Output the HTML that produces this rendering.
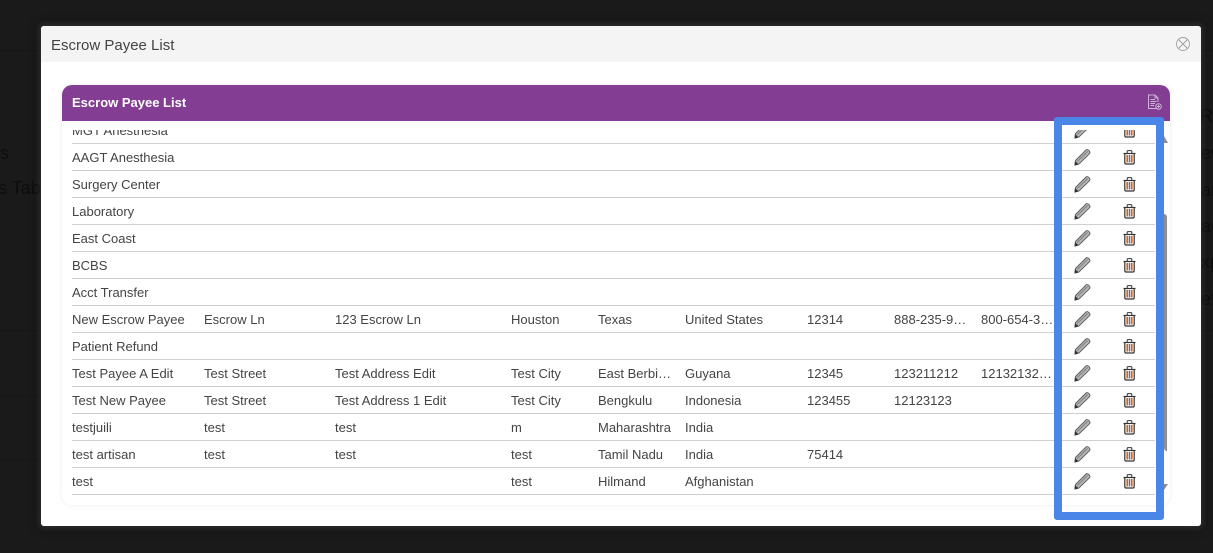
<!DOCTYPE html>
<html><head><meta charset="utf-8">
<style>
html,body{margin:0;padding:0;width:1213px;height:553px;overflow:hidden;background:#1a1a1a;font-family:"Liberation Sans",Arial,sans-serif;}
.abs,.t{position:absolute}
.bgt{position:absolute;color:#0e0e0e;font-size:18px;line-height:20px;white-space:nowrap}
.band{position:absolute;left:0;width:1213px;height:1px;background:#161616}
#modal{position:absolute;left:41px;top:26px;width:1160px;height:500px;background:#fff;border-radius:3px;box-shadow:0 0 6px 2px rgba(255,255,255,.12),0 0 12px rgba(0,0,0,.5);overflow:hidden}
#mh{position:absolute;left:0;top:0;width:1160px;height:36px;background:#f4f4f4;color:#444;font-size:15px;line-height:40px;text-indent:10px;overflow:hidden}
#panel{position:absolute;left:62px;top:85px;width:1108px;height:420px;background:#fff;border-radius:10px;box-shadow:0 0 6px rgba(0,0,0,.08)}
#ph{position:absolute;left:62px;top:85px;width:1108px;height:36px;background:#833e94;border-radius:10px 10px 0 0;color:#fff;font-weight:bold;font-size:13px;line-height:35px;text-indent:10px}
#clip{position:absolute;left:0;top:130px;width:1213px;height:370px;overflow:hidden}
.r{position:absolute;left:72px;width:1083px;height:26px;border-bottom:1px solid #cfcfcf;font-size:13px;color:#444}
.t{top:0;line-height:27px;white-space:nowrap}
.c1{left:0}.c2{left:132px}.c3{left:263px}.c4{left:439px}.c5{left:526px}.c6{left:613px}.c7{left:735px}.c8{left:822px}.c9{left:909px}
.r svg{position:absolute}
.p{left:1002px;top:4px}
.d{left:1051px;top:6px}
#blue{position:absolute;left:1054px;top:117px;width:94px;height:387px;border:8px solid #4a86e8;border-radius:3px}
</style></head><body>
<svg width="0" height="0" style="position:absolute"><defs>
<g id="pen" fill="none" stroke="#5c5c5c" stroke-width=".9"><path d="M1.5 12.5 L12 2 Q13.2 1 14.5 2.2 L15.5 3.2 Q16.5 4.6 15.4 5.8 L5 16 L1 17 Z" fill="#b4b4b4"/><path d="M3.2 13.6 L13.6 3.4" stroke="#7c7c7c"/><path d="M1.3 14 L3.8 16.2 L1 17 Z" fill="#333" stroke="#333"/></g>
<g id="tr" fill="none" stroke="#333" stroke-width="1"><path d="M0.5 3.5H12.5" stroke-width="1.2"/><path d="M4.2 3V1.2Q4.2 .6 5 .6H8Q8.8 .6 8.8 1.2V3"/><path d="M1.8 3.5V12.5Q1.8 14 3 14H10Q11.2 14 11.2 12.5V3.5" stroke-width="1.2"/><path d="M4.2 5V12.5" stroke="#d0671f" stroke-width="1.6"/><path d="M6.5 5V12.5" stroke="#7d6a78" stroke-width="1.6"/><path d="M8.8 5V12.5" stroke="#d0671f" stroke-width="1.6"/></g>
</defs></svg>

<div class="band" style="top:50px"></div>
<div class="band" style="top:330px"></div>
<div class="band" style="top:395px"></div>
<div class="band" style="top:460px"></div>
<div class="bgt" style="left:-4px;top:143px">ls</div>
<div class="bgt" style="left:-12px;top:178px">es Table</div>
<div class="bgt" style="left:1200px;top:106px">RT</div>
<div class="bgt" style="left:1201px;top:143px">ew</div>
<div class="bgt" style="left:1201px;top:180px">an</div>
<div class="bgt" style="left:1201px;top:216px">ac</div>
<div class="bgt" style="left:1201px;top:252px">xp</div>
<div class="bgt" style="left:1201px;top:289px">ef</div>

<div id="modal"><div id="mh">Escrow Payee List</div>
<svg class="abs" style="left:1134px;top:10px" width="16" height="16" viewBox="0 0 16 16" fill="none" stroke="#a0a0a0" stroke-width=".9"><circle cx="8" cy="8" r="6.5"/><path d="M3.5 3.5L12.5 12.5M12.5 3.5L3.5 12.5"/></svg>
</div>
<div id="panel"></div>
<div id="ph">Escrow Payee List
<svg class="abs" style="left:1085px;top:9px" width="16" height="17" viewBox="0 0 16 17" fill="none" stroke="#cdb3d4" stroke-width="1"><path d="M10.5 14.5H1.5V1H8L11 4V8M8 1V4H11"/><path d="M3.5 5.5H8M3.5 7.5H9.5M3.5 9.5H8M3.5 11.5H7"/><circle cx="11.5" cy="12.5" r="2.8"/><path d="M11.5 11V14M10 12.5H13"/></svg>
</div>

<div class="abs" style="left:1160px;top:136px;width:0;height:0;border-left:4px solid transparent;border-right:4px solid transparent;border-bottom:7px solid #8f8f8f"></div>
<div class="abs" style="left:1164px;top:214px;width:3px;height:237px;background:#8f8f8f;border-radius:0 3px 0 3px"></div>
<div class="abs" style="left:1160px;top:484px;width:0;height:0;border-left:4px solid transparent;border-top:6px solid #8f8f8f;border-right:4px solid transparent"></div>

<div id="clip">
<div class="r" style="top:-13px"><span class="t c1">MGT Anesthesia</span><svg class="p" width="18" height="18"><use href="#pen"/></svg><svg class="d" width="13" height="15"><use href="#tr"/></svg></div>
<div class="r" style="top:14px"><span class="t c1">AAGT Anesthesia</span><svg class="p" width="18" height="18"><use href="#pen"/></svg><svg class="d" width="13" height="15"><use href="#tr"/></svg></div>
<div class="r" style="top:41px"><span class="t c1">Surgery Center</span><svg class="p" width="18" height="18"><use href="#pen"/></svg><svg class="d" width="13" height="15"><use href="#tr"/></svg></div>
<div class="r" style="top:68px"><span class="t c1">Laboratory</span><svg class="p" width="18" height="18"><use href="#pen"/></svg><svg class="d" width="13" height="15"><use href="#tr"/></svg></div>
<div class="r" style="top:95px"><span class="t c1">East Coast</span><svg class="p" width="18" height="18"><use href="#pen"/></svg><svg class="d" width="13" height="15"><use href="#tr"/></svg></div>
<div class="r" style="top:122px"><span class="t c1">BCBS</span><svg class="p" width="18" height="18"><use href="#pen"/></svg><svg class="d" width="13" height="15"><use href="#tr"/></svg></div>
<div class="r" style="top:149px"><span class="t c1">Acct Transfer</span><svg class="p" width="18" height="18"><use href="#pen"/></svg><svg class="d" width="13" height="15"><use href="#tr"/></svg></div>
<div class="r" style="top:176px"><span class="t c1">New Escrow Payee</span><span class="t c2">Escrow Ln</span><span class="t c3">123 Escrow Ln</span><span class="t c4">Houston</span><span class="t c5">Texas</span><span class="t c6">United States</span><span class="t c7">12314</span><span class="t c8">888-235-9…</span><span class="t c9">800-654-3…</span><svg class="p" width="18" height="18"><use href="#pen"/></svg><svg class="d" width="13" height="15"><use href="#tr"/></svg></div>
<div class="r" style="top:203px"><span class="t c1">Patient Refund</span><svg class="p" width="18" height="18"><use href="#pen"/></svg><svg class="d" width="13" height="15"><use href="#tr"/></svg></div>
<div class="r" style="top:230px"><span class="t c1">Test Payee A Edit</span><span class="t c2">Test Street</span><span class="t c3">Test Address Edit</span><span class="t c4">Test City</span><span class="t c5">East Berbi…</span><span class="t c6">Guyana</span><span class="t c7">12345</span><span class="t c8">123211212</span><span class="t c9">12132132…</span><svg class="p" width="18" height="18"><use href="#pen"/></svg><svg class="d" width="13" height="15"><use href="#tr"/></svg></div>
<div class="r" style="top:257px"><span class="t c1">Test New Payee</span><span class="t c2">Test Street</span><span class="t c3">Test Address 1 Edit</span><span class="t c4">Test City</span><span class="t c5">Bengkulu</span><span class="t c6">Indonesia</span><span class="t c7">123455</span><span class="t c8">12123123</span><svg class="p" width="18" height="18"><use href="#pen"/></svg><svg class="d" width="13" height="15"><use href="#tr"/></svg></div>
<div class="r" style="top:284px"><span class="t c1">testjuili</span><span class="t c2">test</span><span class="t c3">test</span><span class="t c4">m</span><span class="t c5">Maharashtra</span><span class="t c6">India</span><svg class="p" width="18" height="18"><use href="#pen"/></svg><svg class="d" width="13" height="15"><use href="#tr"/></svg></div>
<div class="r" style="top:311px"><span class="t c1">test artisan</span><span class="t c2">test</span><span class="t c3">test</span><span class="t c4">test</span><span class="t c5">Tamil Nadu</span><span class="t c6">India</span><span class="t c7">75414</span><svg class="p" width="18" height="18"><use href="#pen"/></svg><svg class="d" width="13" height="15"><use href="#tr"/></svg></div>
<div class="r" style="top:338px"><span class="t c1">test</span><span class="t c4">test</span><span class="t c5">Hilmand</span><span class="t c6">Afghanistan</span><svg class="p" width="18" height="18"><use href="#pen"/></svg><svg class="d" width="13" height="15"><use href="#tr"/></svg></div>
</div>
<div id="blue"></div>
</body></html>
